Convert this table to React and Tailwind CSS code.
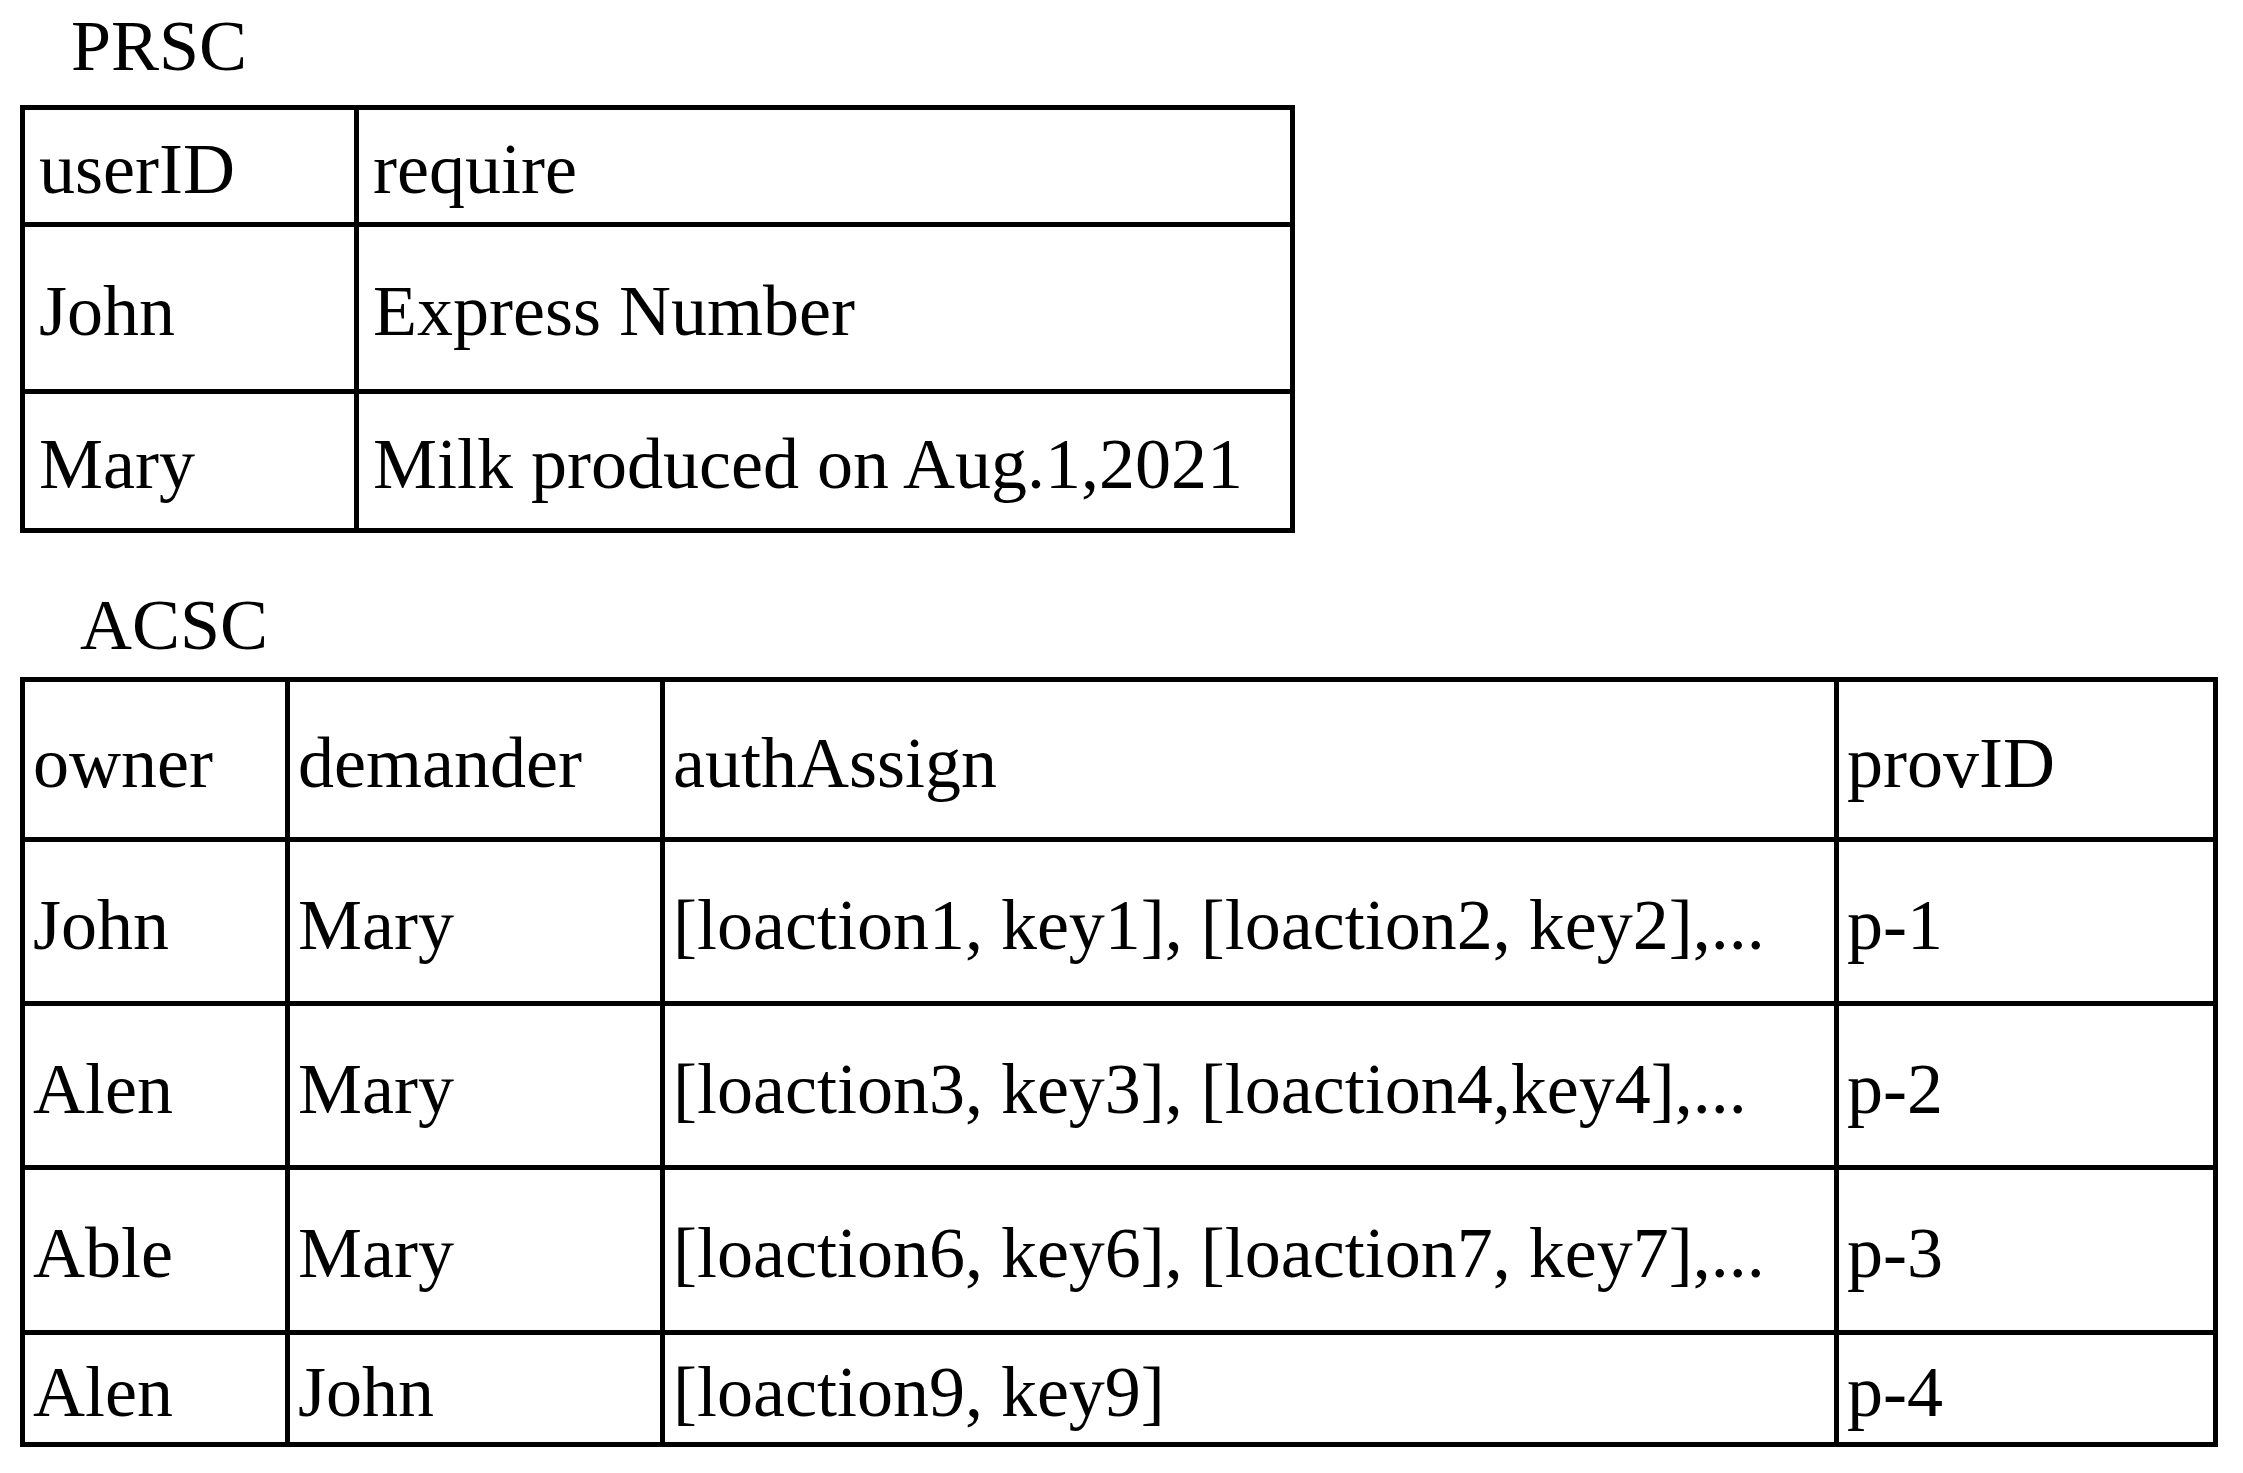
import React from 'react';

const prscRows = [
  ['userID', 'require'],
  ['John', 'Express Number'],
  ['Mary', 'Milk produced on Aug.1,2021'],
];

const acscRows = [
  ['owner', 'demander', 'authAssign', 'provID'],
  ['John', 'Mary', '[loaction1, key1], [loaction2, key2],...', 'p-1'],
  ['Alen', 'Mary', '[loaction3, key3], [loaction4,key4],...', 'p-2'],
  ['Able', 'Mary', '[loaction6, key6], [loaction7, key7],...', 'p-3'],
  ['Alen', 'John', '[loaction9, key9]', 'p-4'],
];

const App = () => {
  return (
    <div className="min-h-screen bg-white text-black font-['Liberation_Serif','Times_New_Roman',serif] text-[72px] leading-[normal] pl-[20px] pt-[5px]">
      {/* PRSC */}
      <div className="pl-[51px]">PRSC</div>
      <div className="mt-[17px] grid w-fit grid-cols-[329px_931px] grid-rows-[112px_162px_134px] gap-[5px] bg-black p-[5px]">
        {prscRows.map((row, i) =>
          row.map((cell, j) => (
            <div key={`${i}-${j}`} className="flex items-center bg-white pl-[14px] pt-[7px] whitespace-nowrap">
              {cell}
            </div>
          ))
        )}
      </div>

      {/* ACSC */}
      <div className="mt-[51px] pl-[60px]">ACSC</div>
      <div className="mt-[10px] grid w-fit grid-cols-[260px_370px_1169px_374px] grid-rows-[155px_159px_159px_160px_107px] gap-[5px] bg-black p-[5px]">
        {acscRows.map((row, i) =>
          row.map((cell, j) => (
            <div key={`${i}-${j}`} className="flex items-center bg-white pl-[8px] pt-[7px] whitespace-nowrap">
              {cell}
            </div>
          ))
        )}
      </div>
    </div>
  );
};

export default App;
